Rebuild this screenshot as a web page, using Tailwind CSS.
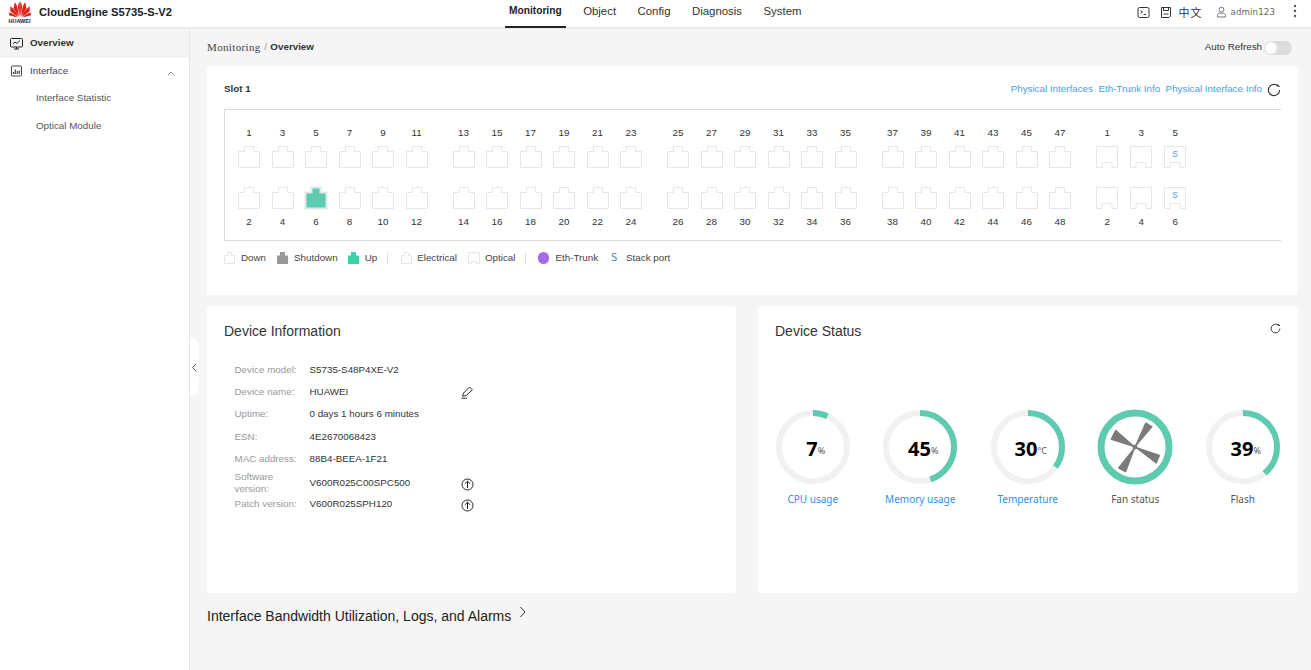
<!DOCTYPE html>
<html lang="en">
<head>
  <meta charset="UTF-8" />
  <title>CloudEngine S5735-S-V2</title>
  <script src="https://cdn.jsdelivr.net/npm/@tailwindcss/browser@4"></script>
</head>
<body class="w-[1311px] h-[670px] overflow-hidden bg-[#f5f5f5] text-[#333] text-[9.8px] font-['Liberation_Sans',Arial,sans-serif]">

  <!-- top bar -->
  <header class="relative flex h-[29px] items-start bg-white border-b-2 border-[#ececec]">
    <div class="flex w-[509px] shrink-0 items-start">
      <div class="ml-[8px] mt-[1px] flex w-[23px] flex-col items-center">
        <svg width="22" height="17" viewBox="0 0 22 17" fill="#e2231a">
          <path d="M10.4 16 8.8 5.5 10.2.4c.5 0 1.2 5 .2 15.6Z"/>
          <path d="M11.6 16 13.2 5.5 11.8.4c-.5 0-1.2 5-.2 15.6Z"/>
          <path d="M9.7 16 4.6 7.6 5.6 1.6C7 2 9.4 7 9.7 16Z"/>
          <path d="M12.3 16 17.4 7.6 16.4 1.6C15 2 12.6 7 12.3 16Z"/>
          <path d="M9 16 1.4 10.6 1.2 5.6C3 6 7 10 9 16Z"/>
          <path d="M13 16 20.6 10.6 20.8 5.6C19 6 15 10 13 16Z"/>
          <path d="M8.4 16.4 0 14.2.2 11.4C3 12 6.6 14 8.4 16.4Z"/>
          <path d="M13.6 16.4 22 14.2 21.8 11.4C19 12 15.4 14 13.6 16.4Z"/>
        </svg>
        <span class="mt-[1px] text-[5.5px] leading-[5px] font-bold text-[#222]">HUAWEI</span>
      </div>
      <span class="ml-[8px] mt-[5px] text-[11.2px] leading-[14px] font-bold text-[#222]">CloudEngine S5735-S-V2</span>
    </div>
    <nav class="flex gap-[21.5px] pt-[4px] text-[11.4px] leading-[14px] text-[#333]">
      <a class="relative text-[10.2px] font-bold text-[#222] after:absolute after:-left-[4px] after:-right-[4px] after:top-[22px] after:h-[2px] after:bg-[#222]">Monitoring</a>
      <a>Object</a>
      <a>Config</a>
      <a>Diagnosis</a>
      <a>System</a>
    </nav>
    <div class="ml-auto flex items-center pt-[5px] text-[#444]">
      <svg width="13" height="13" viewBox="0 0 13 13" fill="none" stroke="#333"><rect x="1" y="1.5" width="11" height="10" rx="1.5"/><path d="M3.5 4.5 5.5 6 3.5 7.5M6.5 8.5H9"/></svg>
      <svg class="ml-[10px]" width="12" height="13" viewBox="0 0 12 13" fill="none" stroke="#333"><path d="M1.5 1.5h9v8.5l-1.5 1.5h-7.5Z"/><path d="M3.5 1.5v3h5v-3M3.5 8h5"/></svg>
      <span class="ml-[6px] text-[11px] leading-[14px] tracking-[1px] font-['Noto_Sans_CJK_SC','Liberation_Sans',sans-serif] text-[#333]">中文</span>
      <svg class="ml-[14px]" width="11" height="12" viewBox="0 0 11 12" fill="none" stroke="#777"><circle cx="5.5" cy="3.6" r="2.4"/><path d="M1.5 11V9.4c0-1.3 1-2.2 2.2-2.2h3.6c1.2 0 2.2.9 2.2 2.2V11Z"/></svg>
      <span class="ml-[3px] text-[8.6px] leading-[14px] font-['DejaVu_Sans',sans-serif] text-[#666] tracking-[0.15px]">admin123</span>
      <svg class="ml-[18px] mr-[14px] -mt-[3px]" width="4" height="14" viewBox="0 0 4 14" fill="#555"><circle cx="2" cy="2" r="1.2"/><circle cx="2" cy="7" r="1.2"/><circle cx="2" cy="12" r="1.2"/></svg>
    </div>
  </header>

  <div class="flex h-[641px]">
    <!-- side menu -->
    <aside class="relative w-[190px] shrink-0 bg-white border-r border-[#e6e6e6]">
      <div class="flex h-[29px] items-center bg-[#f4f4f4] pl-[10px]">
        <svg width="13" height="13" viewBox="0 0 13 13" fill="none" stroke="#222"><rect x=".5" y="1.5" width="12" height="8.5" rx="1"/><path d="M2.8 7 5 5 6.8 6.4 9.8 3.6M4 12h5M6.5 10v2"/></svg>
        <span class="ml-[7px] font-bold text-[#333]">Overview</span>
      </div>
      <div class="flex h-[26px] items-center pl-[11px] pr-[14px]">
        <svg width="11" height="12" viewBox="0 0 11 12" fill="none" stroke="#444"><rect x=".5" y="1" width="10" height="10" rx="1"/><path d="M2.5 9V7M4.3 9V4.5M6.2 9V6M8.2 9V5.5" stroke-width="1.2"/></svg>
        <span class="ml-[8px] text-[#444]">Interface</span>
        <svg class="ml-auto mt-[5px]" width="8" height="5" viewBox="0 0 8 5" fill="none" stroke="#888"><path d="M.8 4.2 4 1l3.2 3.2"/></svg>
      </div>
      <div class="flex h-[28px] items-center pl-[36px] text-[#555]">Interface Statistic</div>
      <div class="flex h-[28px] items-center pl-[36px] text-[#555]">Optical Module</div>
      <button class="absolute left-[190px] top-[309px] flex h-[58px] w-[9px] items-center justify-center rounded-r-[8px] bg-white">
        <svg width="5" height="9" viewBox="0 0 5 9" fill="none" stroke="#555"><path d="M4 .8.8 4.5 4 8.2"/></svg>
      </button>
    </aside>

    <main class="w-[1121px] shrink-0 pl-[17px] pr-[13px]">
      <!-- breadcrumb -->
      <div class="flex h-[37px] items-center">
        <span class="text-[11px] font-['Liberation_Serif','DejaVu_Serif',serif] text-[#444] tracking-[0.35px]">Monitoring</span>
        <span class="mx-[3.5px] text-[#999]">/</span>
        <span class="font-bold text-[#333]">Overview</span>
        <span class="ml-auto text-[#333]">Auto Refresh</span>
        <span class="ml-[2px] mr-[6px] flex h-[14px] w-[28px] items-center rounded-full bg-[#dcdcdc] pl-[1px]"><span class="h-[12px] w-[12px] rounded-full bg-white"></span></span>
      </div>

      <!-- slot card -->
      <section class="h-[229px] rounded-[4px] bg-white pl-[17px] pr-[17px]">
        <div class="flex h-[43px] items-center pt-[4px]">
          <span class="font-bold text-[#333]">Slot 1</span>
          <a class="ml-auto text-[#3fa0f5]">Physical Interfaces</a>
          <a class="ml-[5.5px] text-[#3fa0f5]">Eth-Trunk Info</a>
          <a class="ml-[5.5px] text-[#3fa0f5]">Physical Interface Info</a>
          <svg class="ml-[5px]" width="14" height="14" viewBox="0 0 14 14" fill="none" stroke="#333" stroke-width="1.1"><path d="M10.8 2.9A5.6 5.6 0 1 0 12.6 7M10.8 1.2V3.2H12.8" stroke-linejoin="round"/></svg>
        </div>
        <div id="ports" class="flex h-[132px] w-[1057px] border-y border-l border-[#dcdcdc] pl-[7.25px] pt-[16px]"></div>
        <div class="flex h-[34px] items-center text-[#444]">
          <svg width="11" height="12" viewBox="0 0 22 24" fill="none" stroke="#e6e6e6" stroke-width="2"><path d="M1 23V7H7V1H15V7H21V23Z"/></svg>
          <span class="ml-[6px]">Down</span>
          <svg class="ml-[11px]" width="11" height="12" viewBox="0 0 22 24" fill="#999"><path d="M0 24V7H6V0H16V7H22V24Z"/></svg>
          <span class="ml-[6px]">Shutdown</span>
          <svg class="ml-[10px]" width="11" height="12" viewBox="0 0 22 24" fill="#3fcfa8"><path d="M0 24V7H6V0H16V7H22V24Z"/></svg>
          <span class="ml-[6px]">Up</span>
          <span class="ml-[10px] h-[11px] w-px bg-[#ddd]"></span>
          <svg class="ml-[13px]" width="11" height="12" viewBox="0 0 22 24" fill="none" stroke="#e6e6e6" stroke-width="2"><path d="M1 23V7H7V1H15V7H21V23Z"/></svg>
          <span class="ml-[5px]">Electrical</span>
          <svg class="ml-[11px]" width="12" height="12" viewBox="0 0 24 24" fill="none" stroke="#e6e6e6" stroke-width="2"><path d="M1 1H23V23H17V19H7V23H1Z"/></svg>
          <span class="ml-[5px]">Optical</span>
          <span class="ml-[10px] h-[11px] w-px bg-[#ddd]"></span>
          <span class="ml-[12px] h-[12px] w-[11px] rounded-full bg-[#a56be6]"></span>
          <span class="ml-[6px]">Eth-Trunk</span>
          <span class="ml-[13px] w-[6px] text-center text-[#3f8fe0] font-['DejaVu_Sans',sans-serif]">S</span>
          <span class="ml-[9px]">Stack port</span>
        </div>
      </section>

      <div class="mt-[11px] flex gap-[22px]">
        <!-- device information -->
        <section class="h-[287px] w-[529px] rounded-[4px] bg-white pl-[17px]">
          <h2 class="h-[53px] pt-[16px] text-[14px] leading-[18px] text-[#333]">Device Information</h2>
          <div class="pl-[10.5px]">
            <div class="flex h-[22px] items-center"><span class="w-[75px] text-[#999]">Device model:</span><span>S5735-S48P4XE-V2</span></div>
            <div class="flex h-[22px] items-center"><span class="w-[75px] text-[#999]">Device name:</span><span class="w-[151px]">HUAWEI</span>
              <svg width="13" height="13" viewBox="0 0 13 13" fill="none" stroke="#333"><path d="M1.5 10.2 2.6 7 8.6 1 11.4 3.8 5 9.6ZM.5 12.2H6"/></svg></div>
            <div class="flex h-[22px] items-center"><span class="w-[75px] text-[#999]">Uptime:</span><span>0 days 1 hours 6 minutes</span></div>
            <div class="flex h-[24px] items-center"><span class="w-[75px] text-[#999]">ESN:</span><span>4E2670068423</span></div>
            <div class="flex h-[21.5px] items-center"><span class="w-[75px] text-[#999]">MAC address:</span><span>88B4-BEEA-1F21</span></div>
            <div class="flex h-[25px] items-center"><span class="w-[75px] pr-[20px] leading-[12px] text-[#999]">Software version:</span><span class="w-[151px]">V600R025C00SPC500</span>
              <svg class="mt-[2px]" width="13" height="13" viewBox="0 0 13 13" fill="none" stroke="#222"><circle cx="6.5" cy="6.5" r="5.5"/><path d="M6.5 10V3.2M3.8 5.8 6.5 3.2 9.2 5.8"/></svg></div>
            <div class="flex h-[18.5px] items-center"><span class="w-[75px] text-[#999]">Patch version:</span><span class="w-[151px]">V600R025SPH120</span>
              <svg class="mt-[1px]" width="13" height="13" viewBox="0 0 13 13" fill="none" stroke="#222"><circle cx="6.5" cy="6.5" r="5.5"/><path d="M6.5 10V3.2M3.8 5.8 6.5 3.2 9.2 5.8"/></svg></div>
          </div>
        </section>

        <!-- device status -->
        <section class="relative h-[287px] w-[540px] rounded-[4px] bg-white">
          <h2 class="pl-[17px] pt-[16px] text-[14px] leading-[18px] text-[#333]">Device Status</h2>
          <svg class="absolute right-[17px] top-[17px]" width="11" height="11" viewBox="0 0 14 14" fill="none" stroke="#333" stroke-width="1.2"><path d="M10.8 2.9A5.6 5.6 0 1 0 12.6 7M10.8 1.2V3.2H12.8" stroke-linejoin="round"/></svg>
          <div id="gauges" class="mt-[69px] flex pl-[1px] font-['Noto_Sans',sans-serif]"></div>
        </section>
      </div>

      <div class="mt-[13px] flex items-start">
        <span class="text-[14px] leading-[20px] text-[#222]">Interface Bandwidth Utilization, Logs, and Alarms</span>
        <svg class="ml-[7px]" width="9" height="12" viewBox="0 0 9 12" fill="none" stroke="#333"><path d="M2.5 1 7 6 2.5 11"/></svg>
      </div>
    </main>
  </div>

  <script>
    const electrical = 'M.5 21.5V5.5H6.5V.5H15.5V5.5H21.5V21.5Z';
    const optical = 'M.5.5H21.5V21.5H16V16.5H6V21.5H.5Z';

    function port(path, up, stack) {
      if (up) {
        return `<svg width="24" height="24" viewBox="-1 -1 24 24" class="-m-[1px]"><path d="${path}" fill="#5ecbb0" stroke="#dcebe6" stroke-width="2"/></svg>`;
      }
      const s = stack ? '<text x="11" y="11" text-anchor="middle" font-size="8.5" fill="#3fa0f5">S</text>' : '';
      return `<svg width="22" height="22" viewBox="0 0 22 22"><path d="${path}" fill="none" stroke="#e6e6e6"/>${s}</svg>`;
    }

    // one column = an odd port on top, the even one below it
    function column(n, opticalPort) {
      const path = opticalPort ? optical : electrical;
      const top = opticalPort ? n - 48 : n;
      const stack = opticalPort && top === 5;
      const width = opticalPort ? 'w-[34px]' : 'w-[33.5px]';
      return `<div class="flex ${width} flex-col items-center">
        <span class="h-[14px] leading-[14px] text-[#333]">${top}</span>
        <span class="mt-[6px] h-[22px]">${port(path, false, stack)}</span>
        <span class="mt-[19px] h-[22px]">${port(path, !opticalPort && n + 1 === 6, stack)}</span>
        <span class="mt-[6px] h-[14px] leading-[14px] text-[#333]">${top + 1}</span>
      </div>`;
    }

    let html = '';
    [1, 13, 25, 37, 49].forEach((start, g) => {
      const count = g === 4 ? 3 : 6;
      html += `<div class="flex ${g ? 'ml-[13.5px]' : ''}">`;
      for (let i = 0; i < count; i++) html += column(start + i * 2, g === 4);
      html += '</div>';
    });
    document.getElementById('ports').innerHTML = html;

    const gauges = [
      { value: 7, show: '7', unit: '%', label: 'CPU usage', link: true },
      { value: 45, show: '45', unit: '%', label: 'Memory usage', link: true },
      { value: 35, show: '30', unit: '°C', label: 'Temperature', link: true },
      { fan: true, label: 'Fan status' },
      { value: 39, show: '39', unit: '%', label: 'Flash' },
    ];
    const c = 2 * Math.PI * 34;
    document.getElementById('gauges').innerHTML = gauges.map(g => {
      let ring;
      if (g.fan) {
        ring = `<svg width="76" height="76" viewBox="-38 -38 76 76">
          <circle r="34" fill="none" stroke="#5ecbb0" stroke-width="7"/>
          <g fill="#7a7a7a" stroke="#7a7a7a" stroke-linejoin="round"><path d="M0 0 10.7-24.3 17.3-20.3Z"/><path d="M0 0 24.7 8.3 21.3 16.3Z"/><path d="M0 0-16.7 21-9.3 25Z"/><path d="M0 0-19.3-17-24-7.7Z"/><circle r="2"/></g>
        </svg>`;
      } else {
        ring = `<svg width="76" height="76" viewBox="-38 -38 76 76">
          <circle r="34" fill="none" stroke="#f1f1f1" stroke-width="6"/>
          <circle r="34" fill="none" stroke="#5ecbb0" stroke-width="6" stroke-dasharray="${c * g.value / 100} ${c}" transform="rotate(-90)"/>
        </svg>
        <div class="absolute inset-0 flex items-center justify-center pl-[6px] pt-[3px] text-black">
          <span class="text-[20px] leading-[20px] font-bold">${g.show}</span><span class="mt-[3px] text-[9px] leading-[9px] text-[#555]">${g.unit}</span>
        </div>`;
      }
      const color = g.link ? 'text-[#2f8ff0]' : 'text-[#555]';
      return `<div class="flex w-[107.5px] flex-col items-center">
        <div class="relative h-[76px] w-[76px]">${ring}</div>
        <span class="mt-[7px] text-[10px] leading-[14px] ${color}">${g.label}</span>
      </div>`;
    }).join('');
  </script>
</body>
</html>
